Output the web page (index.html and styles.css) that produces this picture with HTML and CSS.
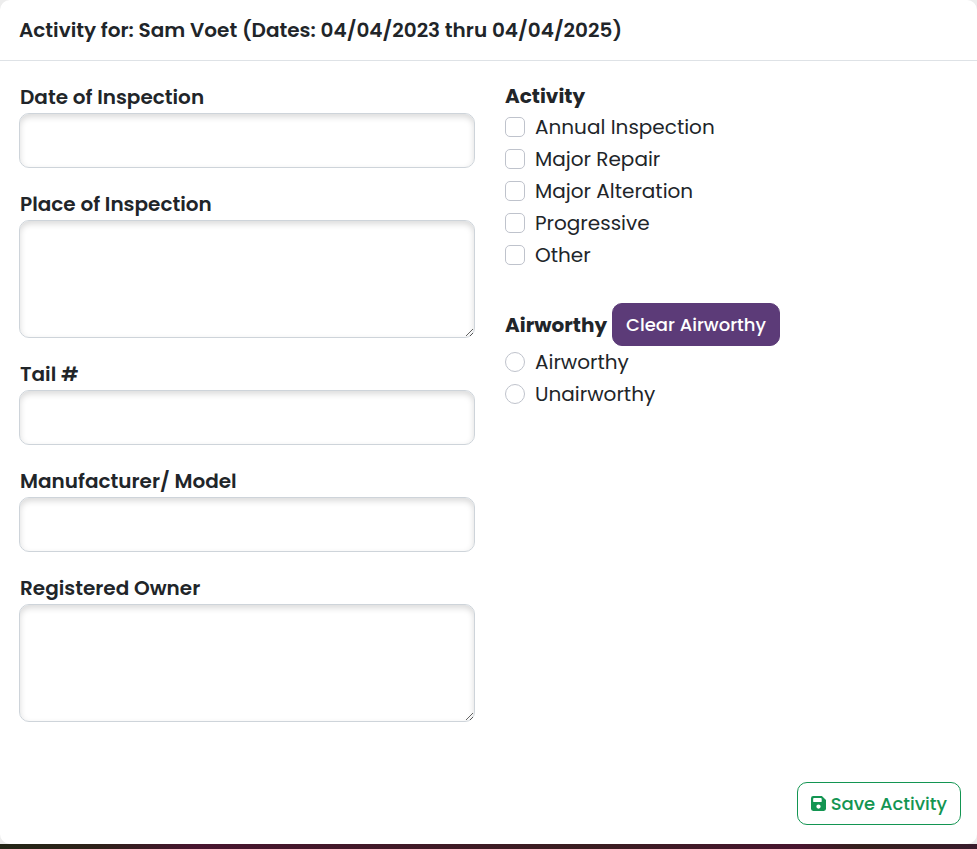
FILE: index.html
```html
<!DOCTYPE html>
<html lang="en">
<head>
  <meta charset="UTF-8">
  <title>Inspection Activity</title>
  <meta name="viewport" content="width=device-width, initial-scale=1.0">
  <link rel="stylesheet" href="styles.css">
</head>
<body>
  <form class="modal-content">
    <header class="modal-header">
      <h1 class="modal-title">Activity for: Sam Voet (Dates: 04/04/2023 thru 04/04/2025)</h1>
    </header>
    <div class="modal-body">
      <div class="column">
        <div class="field">
          <label for="inspection-date">Date of Inspection</label>
          <input type="text" id="inspection-date" class="form-control">
        </div>
        <div class="field">
          <label for="inspection-place">Place of Inspection</label>
          <textarea id="inspection-place" class="form-control"></textarea>
        </div>
        <div class="field">
          <label for="tail">Tail #</label>
          <input type="text" id="tail" class="form-control">
        </div>
        <div class="field">
          <label for="model">Manufacturer/ Model</label>
          <input type="text" id="model" class="form-control">
        </div>
        <div class="field">
          <label for="owner">Registered Owner</label>
          <textarea id="owner" class="form-control"></textarea>
        </div>
      </div>
      <div class="column">
        <div class="group">
          <h2 class="group-title">Activity</h2>
          <div class="form-check">
            <input type="checkbox" id="annual">
            <label for="annual">Annual Inspection</label>
          </div>
          <div class="form-check">
            <input type="checkbox" id="repair">
            <label for="repair">Major Repair</label>
          </div>
          <div class="form-check">
            <input type="checkbox" id="alteration">
            <label for="alteration">Major Alteration</label>
          </div>
          <div class="form-check">
            <input type="checkbox" id="progressive">
            <label for="progressive">Progressive</label>
          </div>
          <div class="form-check">
            <input type="checkbox" id="other">
            <label for="other">Other</label>
          </div>
        </div>
        <div class="group">
          <div class="group-head">
            <h2 class="group-title">Airworthy</h2>
            <button type="button" class="btn btn-primary">Clear Airworthy</button>
          </div>
          <div class="form-check">
            <input type="radio" name="airworthy" id="airworthy-yes">
            <label for="airworthy-yes">Airworthy</label>
          </div>
          <div class="form-check">
            <input type="radio" name="airworthy" id="airworthy-no">
            <label for="airworthy-no">Unairworthy</label>
          </div>
        </div>
      </div>
    </div>
    <footer class="modal-footer">
      <button type="button" class="btn btn-outline">
        <svg class="icon" viewBox="0 0 16 16" aria-hidden="true">
          <path fill="currentColor" fill-rule="evenodd" d="M2.3 0H11.6L16 4.2V13.7Q16 16 13.7 16H2.3Q0 16 0 13.7V2.3Q0 0 2.3 0ZM3.2 2.2Q2.3 2.2 2.3 3.1V5.6Q2.3 6.5 3.2 6.5H10.5Q11.4 6.5 11.4 5.6V3.1Q11.4 2.2 10.5 2.2ZM8 9A2.3 2.3 0 1 0 8 13.6A2.3 2.3 0 1 0 8 9Z"/>
        </svg>
        Save Activity
      </button>
    </footer>
  </form>
</body>
</html>
```
FILE: styles.css
```css
* {
  box-sizing: border-box;
}
body {
  margin: 0;
  min-height: 100vh;
  display: flex;
  flex-direction: column;
  background-color: #ededed;
  color: #212529;
  font-family: Poppins, Inter, sans-serif;
  font-size: 20px;
}
/* dark strip of the page under the dialog */
body::after {
  content: "";
  height: 5px;
  background: linear-gradient(to right, #232616, #2e2119 10%, #48152f 20%, #3a1d20 60%, #48152f 82%, #35201d 88%, #391c2c);
}
.modal-content {
  flex: 1;
  display: flex;
  flex-direction: column;
  background-color: white;
  border-radius: 10px;
}
.modal-header {
  padding: 15px 19px;
  border-bottom: 1px solid #dee2e6;
}
.modal-title {
  margin: 0;
  font-size: 20px;
  font-weight: 600;
  line-height: 30px;
}
.modal-body {
  flex: 1;
  display: grid;
  grid-template-columns: 1fr 1fr;
  gap: 30px;
  padding: 20px 16px 20px 19px;
}
.column {
  display: flex;
  flex-direction: column;
  gap: 20px;
}
.field {
  display: flex;
  flex-direction: column;
}
.field label {
  padding-left: 1px;
  font-weight: 600;
  line-height: 32px;
}
.form-control {
  width: 100%;
  height: 55px;
  padding: 10px 16px;
  border: 1px solid #ced4da;
  border-radius: 10px;
  background-color: white;
  box-shadow: inset 0 3px 6px rgba(0, 0, 0, 0.15);
  color: inherit;
  font: inherit;
}
textarea.form-control {
  height: 118px;
  resize: vertical;
}
.group {
  margin-bottom: 12px;
}
.group-head {
  display: flex;
  align-items: center;
  gap: 5px;
}
.group-title {
  margin: 0;
  font-size: 20px;
  font-weight: 700;
  line-height: 30px;
}
.form-check {
  display: flex;
  align-items: center;
  gap: 10px;
  line-height: 32px;
}
.form-check input {
  appearance: none;
  width: 20px;
  height: 20px;
  margin: 0;
  border: 1px solid #bfc3cc;
  border-radius: 5px;
  background-color: white;
}
.form-check input[type="radio"] {
  border-radius: 50%;
}
.form-check input:checked {
  background-color: #5c3b78;
}
.btn {
  display: flex;
  align-items: center;
  gap: 5px;
  padding: 8px 13px;
  border: 1px solid;
  border-radius: 10px;
  font-family: inherit;
  font-size: 18px;
  font-weight: 500;
  line-height: 25px;
  cursor: pointer;
}
.btn-primary {
  border-color: #5c3b78;
  background-color: #5c3b78;
  color: white;
}
.btn-outline {
  border-color: #139552;
  background-color: white;
  color: #139552;
}
.icon {
  width: 15px;
  height: 15px;
}
.modal-footer {
  display: flex;
  justify-content: flex-end;
  padding: 19px 16px;
}
```
